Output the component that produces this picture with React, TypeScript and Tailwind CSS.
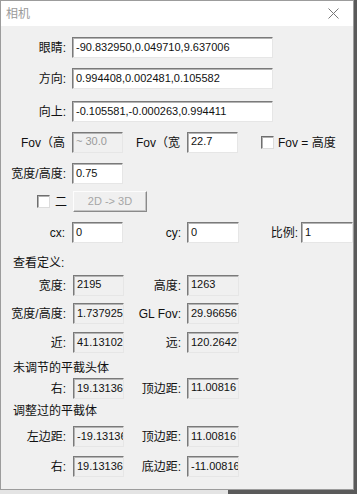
import React from "react";

const FONT = {
  fontFamily: '"Liberation Sans", "Noto Sans CJK SC", sans-serif',
};

function Field({
  value,
  w,
  ro,
  top,
  dim,
}: {
  value: string;
  w: string;
  ro?: boolean;
  top?: boolean;
  dim?: boolean;
}) {
  return (
    <div
      className={`${w} h-[21px] flex ${top ? "items-start pt-[2px]" : "items-center"} overflow-hidden whitespace-nowrap pl-[3px] text-[11px] leading-[13px] border border-t-[#7a7a7a] border-l-[#7a7a7a] border-r-[#e6e6e6] border-b-[#e6e6e6] shadow-[inset_1px_1px_0_#b4b4b4] ${
        ro ? "bg-[#f0f0f0]" : "bg-white"
      } ${dim ? "text-[#9a9a9a]" : "text-[#111]"}`}
    >
      {value}
    </div>
  );
}

function Label({ text, w }: { text: string; w: string }) {
  return <div className={`${w} shrink-0 text-right text-[12px] leading-[16px] text-[#111]`}>{text}</div>;
}

function Check() {
  return (
    <div className="w-[13px] h-[13px] bg-white border border-t-[#6e6e6e] border-l-[#6e6e6e] border-r-[#dcdcdc] border-b-[#dcdcdc] shadow-[inset_1px_1px_0_#b0b0b0]" />
  );
}

function Row({ mt, children }: { mt: string; children: React.ReactNode }) {
  return <div className={`flex items-center h-[21px] ${mt}`}>{children}</div>;
}

function Pair({
  left,
  lv,
  right,
  rv,
  mt,
  ltop,
  rtop,
}: {
  left: string;
  lv: string;
  right: string;
  rv: string;
  mt: string;
  ltop?: boolean;
  rtop?: boolean;
}) {
  return (
    <Row mt={mt}>
      <Label text={left} w="w-[65px]" />
      <div className="ml-[7px]">
        <Field value={lv} w="w-[51px]" ro top={ltop} />
      </div>
      <Label text={right} w="w-[57px]" />
      <div className="ml-[6px]">
        <Field value={rv} w="w-[52px]" ro top={rtop} />
      </div>
    </Row>
  );
}

export default function App() {
  return (
    <div className="w-[357px] h-[494px] bg-[#5a5a5a] flex flex-col overflow-hidden" style={FONT}>
      <div className="flex">
        <div className="w-[354px] h-[490px] flex flex-col border border-[#9c9c9c] bg-[#f0f0f0]">
          {/* title bar */}
          <div className="h-[25px] bg-white flex items-center justify-between pl-[5px] pr-[10px] shrink-0">
            <span className="text-[12px] text-[#9a9a9a]">相机</span>
            <svg width="11" height="11" viewBox="0 0 11 11" className="mr-[4px]">
              <path d="M0.5 0.5 L10.5 10.5 M10.5 0.5 L0.5 10.5" stroke="#777" strokeWidth="1" fill="none" />
            </svg>
          </div>

          <div className="flex flex-col">
            <Row mt="mt-[11px]">
              <Label text="眼睛:" w="w-[65px]" />
              <div className="ml-[6px]">
                <Field value="-90.832950,0.049710,9.637006" w="w-[201px]" />
              </div>
            </Row>
            <Row mt="mt-[10px]">
              <Label text="方向:" w="w-[65px]" />
              <div className="ml-[6px]">
                <Field value="0.994408,0.002481,0.105582" w="w-[201px]" />
              </div>
            </Row>
            <Row mt="mt-[12px]">
              <Label text="向上:" w="w-[65px]" />
              <div className="ml-[6px]">
                <Field value="-0.105581,-0.000263,0.994411" w="w-[201px]" />
              </div>
            </Row>

            <Row mt="mt-[10px]">
              <Label text="Fov（高" w="w-[64px]" />
              <div className="ml-[7px]">
                <Field value="~ 30.0" w="w-[51px]" ro top dim />
              </div>
              <Label text="Fov（宽" w="w-[57px]" />
              <div className="ml-[7px]">
                <Field value="22.7" w="w-[51px]" top />
              </div>
              <div className="ml-[23px] flex items-center gap-[4px]">
                <Check />
                <span className="text-[12px] leading-[16px] text-[#111]">Fov = 高度</span>
              </div>
            </Row>

            <Row mt="mt-[10px]">
              <Label text="宽度/高度:" w="w-[65px]" />
              <div className="ml-[6px]">
                <Field value="0.75" w="w-[51px]" />
              </div>
            </Row>

            <Row mt="mt-[7px]">
              <div className="w-[36px]" />
              <Check />
              <span className="ml-[5px] text-[12px] leading-[16px] text-[#111]">二</span>
              <div className="ml-[6px] w-[74px] h-[21px] flex items-center justify-center text-[11px] text-[#a6a6a6] bg-[#f0f0f0] border border-t-[#fdfdfd] border-l-[#fdfdfd] border-r-[#8a8a8a] border-b-[#8a8a8a] shadow-[inset_-1px_-1px_0_#c4c4c4]">
                2D -&gt; 3D
              </div>
            </Row>

            <Row mt="mt-[10px]">
              <Label text="cx:" w="w-[64px]" />
              <div className="ml-[7px]">
                <Field value="0" w="w-[51px]" />
              </div>
              <Label text="cy:" w="w-[58px]" />
              <div className="ml-[6px]">
                <Field value="0" w="w-[52px]" />
              </div>
              <Label text="比例:" w="w-[59px]" />
              <div className="ml-[3px]">
                <Field value="1" w="w-[52px]" />
              </div>
            </Row>

            <div className="mt-[12px] h-[16px] pl-[12px] text-[12px] leading-[16px] text-[#111]">查看定义:</div>

            <Pair mt="mt-[4px]" left="宽度:" lv="2195" right="高度:" rv="1263" ltop rtop />
            <Pair mt="mt-[7px]" left="宽度/高度:" lv="1.737925" right="GL Fov:" rv="29.96656" />
            <Pair mt="mt-[8px]" left="近:" lv="41.13102" right="远:" rv="120.2642" />

            <div className="mt-[7px] h-[16px] pl-[12px] text-[12px] leading-[16px] text-[#111]">未调节的平截头体</div>

            <Pair mt="mt-[2px]" left="右:" lv="19.13136" right="顶边距:" rv="11.00816" rtop />

            <div className="mt-[4px] h-[16px] pl-[12px] text-[12px] leading-[16px] text-[#111]">调整过的平截体</div>

            <Pair mt="mt-[7px]" left="左边距:" lv="-19.13136" right="顶边距:" rv="11.00816" />
            <Pair mt="mt-[9px]" left="右:" lv="19.13136" right="底边距:" rv="-11.00816" />
          </div>
        </div>
      </div>
      <div className="flex h-[4px]">
        <div className="w-[228px] bg-[#e4e4e4]" />
      </div>
    </div>
  );
}
